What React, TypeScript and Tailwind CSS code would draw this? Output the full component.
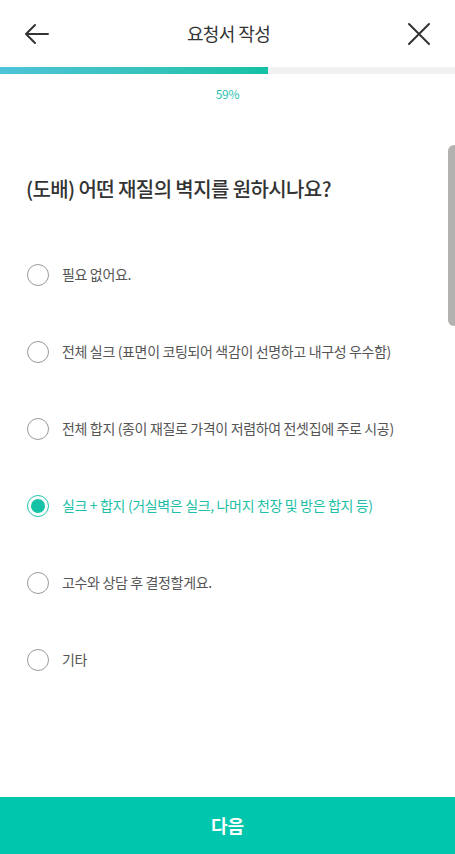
import { useState } from "react"

const options = [
  "필요 없어요.",
  "전체 실크 (표면이 코팅되어 색감이 선명하고 내구성 우수함)",
  "전체 합지 (종이 재질로 가격이 저렴하여 전셋집에 주로 시공)",
  "실크 + 합지 (거실벽은 실크, 나머지 천장 및 방은 합지 등)",
  "고수와 상담 후 결정할게요.",
  "기타",
]

const font = { fontFamily: '"Noto Sans CJK KR", "Noto Sans", sans-serif' }

export default function App() {
  const [selected, setSelected] = useState(3)

  return (
    <div className="relative flex h-[854px] w-[455px] flex-col overflow-hidden bg-white" style={font}>
      {/* header */}
      <div className="flex h-[67px] items-center justify-between px-[24px]">
        <svg width="26" height="22" viewBox="0 0 26 22" fill="none" stroke="#333" strokeWidth="2" strokeLinecap="round" strokeLinejoin="round">
          <path d="M24 11H2M11 2L2 11l9 9" />
        </svg>
        <h1 className="text-[18px] font-normal tracking-[-0.6px] text-[#333]">요청서 작성</h1>
        <svg width="24" height="24" viewBox="0 0 24 24" fill="none" stroke="#333" strokeWidth="2" strokeLinecap="round">
          <path d="M2 2l20 20M22 2L2 22" />
        </svg>
      </div>

      {/* progress */}
      <div className="h-[7px] w-full bg-[#f1f1f1]">
        <div className="h-full w-[59%] bg-gradient-to-r from-[#4ec3d8] to-[#13c1a4]" />
      </div>
      <p className="mt-[14px] text-center text-[12px] leading-none tracking-[-0.3px] text-[#2cc3b0]">59%</p>

      {/* question */}
      <h2 className="mt-[74px] px-[26px] text-[20px] font-medium tracking-[-0.6px] text-[#333]">
        (도배) 어떤 재질의 벽지를 원하시나요?
      </h2>

      <div className="mt-[32px] flex flex-col">
        {options.map((opt, i) => {
          const on = i === selected
          return (
            <button
              key={i}
              onClick={() => setSelected(i)}
              className="flex h-[77px] items-center gap-[13px] px-[27px] text-left"
            >
              <span
                className={
                  on
                    ? "flex h-[22px] w-[22px] shrink-0 items-center justify-center rounded-full border-[1.5px] border-[#1fc3ab]"
                    : "flex h-[22px] w-[22px] shrink-0 items-center justify-center rounded-full border-[1.5px] border-[#9a9a9a]"
                }
              >
                {on && <span className="h-[14px] w-[14px] rounded-full bg-[#14c2a7]" />}
              </span>
              <span
                className={
                  on
                    ? "text-[14px] tracking-[-0.35px] text-[#21bfa8]"
                    : "text-[14px] tracking-[-0.35px] text-[#555]"
                }
              >
                {opt}
              </span>
            </button>
          )
        })}
      </div>

      {/* scrollbar */}
      <div className="absolute right-0 top-[145px] h-[181px] w-[7px] rounded-l-[6px] bg-[#b4b2b0]" />

      {/* next */}
      <button className="mt-auto flex h-[57px] w-full items-center justify-center bg-[#00c6ad] text-[18px] font-bold text-white">
        다음
      </button>
    </div>
  )
}
